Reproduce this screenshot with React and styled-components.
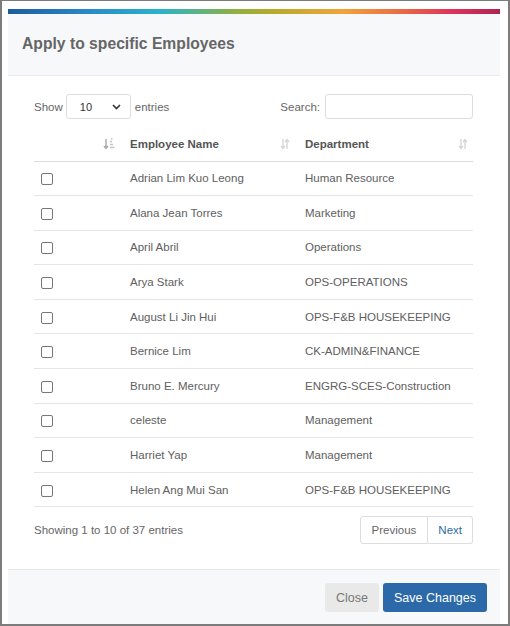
import React from "react";
import styled, { createGlobalStyle } from "styled-components";

const employees = [
  ["Adrian Lim Kuo Leong", "Human Resource"],
  ["Alana Jean Torres", "Marketing"],
  ["April Abril", "Operations"],
  ["Arya Stark", "OPS-OPERATIONS"],
  ["August Li Jin Hui", "OPS-F&B HOUSEKEEPING"],
  ["Bernice Lim", "CK-ADMIN&FINANCE"],
  ["Bruno E. Mercury", "ENGRG-SCES-Construction"],
  ["celeste", "Management"],
  ["Harriet Yap", "Management"],
  ["Helen Ang Mui San", "OPS-F&B HOUSEKEEPING"],
];

function SortBoth() {
  return (
    <svg width="10" height="12" viewBox="0 0 10 12">
      <path d="M3 1v9M1 8l2 2.5L5 8" stroke="#d6d6d6" strokeWidth="1.4" fill="none" />
      <path d="M7 11V2M5 4l2-2.5L9 4" stroke="#d6d6d6" strokeWidth="1.4" fill="none" />
    </svg>
  );
}

function SortAsc() {
  return (
    <svg width="12" height="12" viewBox="0 0 12 12">
      <path d="M3 1v9M1 8l2 2.5L5 8" stroke="#a9a9a9" strokeWidth="1.4" fill="none" />
      <path d="M7 3.5h2M7 6.5h3M7 9.5h4.5" stroke="#c4c4c4" strokeWidth="1.4" fill="none" />
      <path d="M8 1h1.5" stroke="#c4c4c4" strokeWidth="1.4" fill="none" />
    </svg>
  );
}

function App() {
  return (
    <>
      <GlobalStyle />
      <Frame>
        <Modal>
          <Rainbow />
          <Header>
            <Title>Apply to specific Employees</Title>
          </Header>
          <Body>
            <Controls>
              <LengthControl>
                Show
                <SelectBox>
                  <span>10</span>
                  <svg width="9" height="6" viewBox="0 0 9 6">
                    <path d="M1 1l3.5 3.5L8 1" stroke="#333" strokeWidth="1.6" fill="none" />
                  </svg>
                </SelectBox>
                entries
              </LengthControl>
              <SearchControl>
                Search:
                <SearchInput />
              </SearchControl>
            </Controls>
            <Table>
              <thead>
                <tr>
                  <Th $w="86px">
                    <SortIcon><SortAsc /></SortIcon>
                  </Th>
                  <Th $w="175px">
                    Employee Name
                    <SortIcon><SortBoth /></SortIcon>
                  </Th>
                  <Th>
                    Department
                    <SortIcon><SortBoth /></SortIcon>
                  </Th>
                </tr>
              </thead>
              <tbody>
                {employees.map(([name, dept]) => (
                  <tr key={name}>
                    <Td>
                      <Check />
                    </Td>
                    <Td>{name}</Td>
                    <Td>{dept}</Td>
                  </tr>
                ))}
              </tbody>
            </Table>
            <InfoRow>
              <span>Showing 1 to 10 of 37 entries</span>
              <Pager>
                <PageButton>Previous</PageButton>
                <PageButton $active>Next</PageButton>
              </Pager>
            </InfoRow>
          </Body>
          <Footer>
            <Button>Close</Button>
            <Button $primary>Save Changes</Button>
          </Footer>
        </Modal>
      </Frame>
    </>
  );
}

export default App;

const GlobalStyle = createGlobalStyle`
  html, body {
    margin: 0;
    padding: 0;
    background: #fff;
    font-family: "Liberation Sans", Arial, sans-serif;
  }
  * {
    box-sizing: border-box;
  }
`;

const Frame = styled.div`
  width: 510px;
  height: 626px;
  border: 2px solid #7c7c7c;
  border-top-width: 1px;
  padding: 8px 8px 0 6px;
  background: #fff;
`;

const Modal = styled.div`
  height: 615px;
  display: flex;
  flex-direction: column;
  background: #fff;
`;

const Rainbow = styled.div`
  height: 5px;
  background: linear-gradient(
    to right,
    #1d5c9f 0%,
    #2a8fc9 18%,
    #29b3c9 31%,
    #8fb043 46%,
    #b2ab2a 53%,
    #f1a43a 68%,
    #ea6a45 80%,
    #e1335a 90%,
    #ad2450 100%
  );
`;

const Header = styled.div`
  height: 62px;
  background: #f7f8fa;
  border-bottom: 1px solid #e9ebee;
  display: flex;
  align-items: center;
  padding: 0 14px 2px;
`;

const Title = styled.h4`
  margin: 0;
  font-size: 15.7px;
  font-weight: bold;
  color: #666;
`;

const Body = styled.div`
  flex: 1;
  padding: 18px 27px 0 26px;
  font-size: 11.5px;
  color: #666;
`;

const Controls = styled.div`
  display: flex;
  justify-content: space-between;
  align-items: center;
  height: 25px;
`;

const LengthControl = styled.label`
  display: flex;
  align-items: center;
  gap: 4px;
`;

const SelectBox = styled.div`
  width: 65px;
  height: 25px;
  margin-left: -1px;
  border: 1px solid #ddd;
  border-radius: 3px;
  display: flex;
  align-items: center;
  justify-content: space-between;
  padding: 0 9px 0 13px;
  color: #333;
  font-size: 11px;
`;

const SearchControl = styled.label`
  display: flex;
  align-items: center;
  gap: 5px;
`;

const SearchInput = styled.div`
  width: 148px;
  height: 25px;
  border: 1px solid #ddd;
  border-radius: 3px;
`;

const Table = styled.table`
  width: 100%;
  margin-top: 8px;
  border-collapse: collapse;
`;

const Th = styled.th`
  position: relative;
  width: ${(p) => p.$w || "auto"};
  height: 34px;
  padding: 0 10px;
  text-align: left;
  font-weight: bold;
  color: #555;
  border-bottom: 1px solid #ddd;
`;

const SortIcon = styled.span`
  position: absolute;
  right: 5px;
  top: 11px;
  display: flex;
`;

const Td = styled.td`
  height: 34.6px;
  padding: 0 10px;
  border-bottom: 1px solid #e6e6e6;
  color: #606060;
  white-space: nowrap;
`;

const Check = styled.span`
  display: block;
  width: 12px;
  height: 12px;
  margin-left: -3px;
  margin-top: 2px;
  border: 1px solid #777;
  border-radius: 2px;
  background: #fff;
`;

const InfoRow = styled.div`
  display: flex;
  justify-content: space-between;
  align-items: center;
  margin-top: 8px;
  height: 29px;
`;

const Pager = styled.div`
  display: flex;
`;

const PageButton = styled.div`
  height: 28px;
  display: flex;
  align-items: center;
  padding: 0 ${(p) => (p.$active ? "10px" : "11px")};
  border: 1px solid #ddd;
  color: ${(p) => (p.$active ? "#2d6aa8" : "#666")};
  &:first-child {
    border-radius: 3px 0 0 3px;
  }
  &:last-child {
    border-left: none;
    border-radius: 0 3px 3px 0;
  }
`;

const Footer = styled.div`
  height: 55px;
  background: #f7f8fa;
  border-top: 1px solid #e6e8eb;
  display: flex;
  justify-content: flex-end;
  align-items: center;
  gap: 4px;
  padding: 1px 13px 0;
`;

const Button = styled.button`
  height: 29px;
  border: none;
  border-radius: 3px;
  padding: 0 11px;
  font-family: "Liberation Sans", Arial, sans-serif;
  font-size: 12.5px;
  background: ${(p) => (p.$primary ? "#2b69a9" : "#e9e9e9")};
  color: ${(p) => (p.$primary ? "#fff" : "#777")};
  font-weight: ${(p) => (p.$primary ? "500" : "normal")};
`;
